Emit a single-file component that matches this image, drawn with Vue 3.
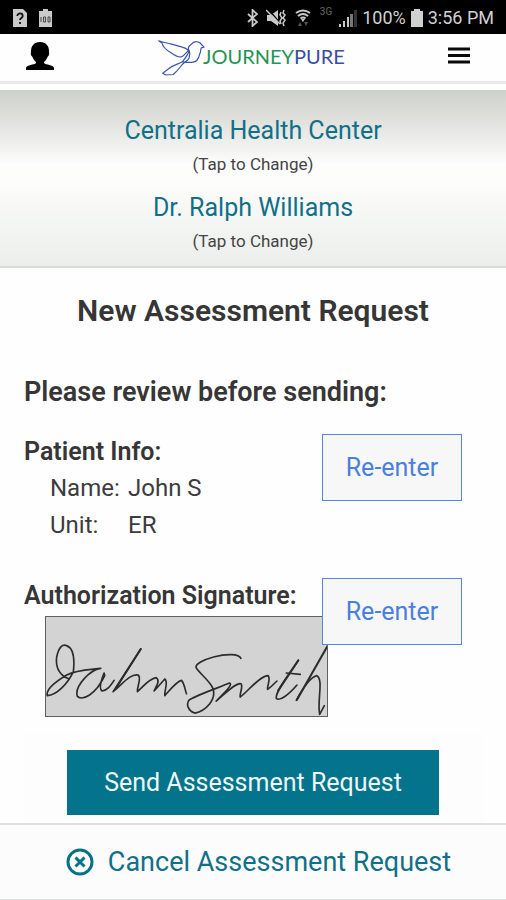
<script setup>
import { ref } from 'vue'

const choices = ref([
  { id: 'facility', name: 'Centralia Health Center' },
  { id: 'doctor', name: 'Dr. Ralph Williams' },
])

const patient = ref([
  { label: 'Name:', value: 'John S' },
  { label: 'Unit:', value: 'ER' },
])
</script>

<template>
  <div class="screen">
    <div class="status">
      <svg class="s-note" viewBox="0 0 14 18" width="14" height="18" aria-hidden="true">
        <path d="M0 0h10l4 4v14H0z" fill="#c9c9c9" />
        <path d="M4.300 7c0-3.400 5.400-3.400 5.400 0 0 2-2.700 2-2.700 4M7 13v2" fill="none" stroke="#111" stroke-width="1.800" />
      </svg>
      <svg class="s-full" viewBox="0 0 13 18" width="13" height="18" aria-hidden="true">
        <path d="M4 0h5v2h4v16H0V2h4z" fill="#c9c9c9" />
        <path d="M2 8v5M4.500 8h2v5h-2zM9 8h2v5H9z" fill="none" stroke="#444" stroke-width="1" />
      </svg>
      <span class="grow"></span>
      <svg viewBox="0 0 12 18" width="12" height="18" aria-hidden="true">
        <path d="M1 5l9 8-4.500 4V1L10 5l-9 8" fill="none" stroke="#c9c9c9" stroke-width="1.800" />
      </svg>
      <svg class="s-mute" viewBox="0 0 20 18" width="20" height="18" aria-hidden="true">
        <path d="M1 6h4l7-5v16l-7-5H1z" fill="#c9c9c9" />
        <path d="M2 0l13 15" stroke="#000" stroke-width="1.500" />
        <path d="M0 1l14 14" stroke="#c9c9c9" stroke-width="1.500" />
        <path d="M15 3l-1 3 2 3-2 3 1 3M18 1l-1 3 2 2-2 3 2 2-2 3 1 3" fill="none" stroke="#c9c9c9" stroke-width="1.500" />
      </svg>
      <svg class="s-wifi" viewBox="0 0 16 18" width="16" height="18" aria-hidden="true">
        <path d="M1 4q7-5 14 0M3 7q5-4 10 0M5.500 9.500q2.500-2 5 0" fill="none" stroke="#c9c9c9" stroke-width="2" />
        <path d="M6 10h4l-2 3z" fill="#c9c9c9" />
        <path d="M5 13l2 4H3zM9 13h4l-2 4z" fill="#555" />
      </svg>
      <span class="net">3G</span>
      <svg class="s-signal" viewBox="0 0 18 18" width="18" height="18" aria-hidden="true">
        <path d="M0 15h2v3H0zM4 12h2v6H4zM8 8h2v10H8z" fill="#c9c9c9" />
        <path d="M11 5h3v13h-3z" fill="#777" />
        <path d="M15 1h3v17h-3z" fill="#333" />
      </svg>
      <span class="clock">100%</span>
      <svg class="s-batt" viewBox="0 0 12 18" width="12" height="18" aria-hidden="true">
        <path d="M3 0h6v2h3v16H0V2h3z" fill="#d0d0d0" />
      </svg>
      <span class="clock">3:56 PM</span>
    </div>

    <header class="bar">
      <button class="icon-btn" type="button" aria-label="Account">
        <svg viewBox="0 0 28 28" width="28" height="28" aria-hidden="true">
          <path d="M14 0c6 0 9 4 9 9 0 2 .5 2.500 0 4-.3 1-1 1-1.500 2-.8 2-2 4-3.500 5v1c2 2 9 1.500 10 5v2H0v-2c1-3.500 8-3 10-5v-1c-1.500-1-2.700-3-3.500-5C6 14 5.300 14 5 13c-.5-1.500 0-2 0-4 0-5 3-9 9-9z" />
        </svg>
      </button>
      <a class="logo" href="#" aria-label="JourneyPure home">
        <svg viewBox="0 0 49 40" width="49" height="40" aria-hidden="true">
          <path d="M1.700 4.800C5 6 10 7 13.700 7.800L25.300 11.200Q29 12 31.500 14.500M1.700 4.800L5 7C6 13 13 16 17 18.800Q22 22 25 20.500C28 19 29 16 31.700 14.500Q30.500 11 33.700 8.800C36 6 38 5 40.500 5.800Q43 6 44 8L47 11.200 44.300 11.800C43.500 13 44 15 43 17.200Q42 22 39.700 24.500C37 27 32 26.800 25.300 25.800C22 28 16 29 12 32.500L5.700 37.200 8.700 39 16.300 38.500C19 36 21 34 23.700 30.500C26 26.500 31 25 32 22.200Q33.500 18 32.300 14.500C31 19 28 22.500 25.300 25.800" fill="none" stroke="#3c56ab" stroke-width="1.200" stroke-linejoin="round" stroke-linecap="round" />
        </svg>
        <span class="word"><span class="green">JOURNEY</span><span class="blue">PURE</span></span>
      </a>
      <button class="icon-btn" type="button" aria-label="Menu">
        <svg viewBox="0 0 22 17" width="22" height="17" aria-hidden="true">
          <path d="M0 2h22M0 8.500h22M0 15h22" stroke="#0a0a0a" stroke-width="3" />
        </svg>
      </button>
    </header>

    <nav class="context">
      <button v-for="c in choices" :key="c.id" class="choice" type="button">
        <span class="choice-name">{{ c.name }}</span>
        <span class="choice-hint">(Tap to Change)</span>
      </button>
    </nav>

    <main class="content">
      <h1>New Assessment Request</h1>
      <h2>Please review before sending:</h2>

      <section class="block patient">
        <h3>Patient Info:</h3>
        <dl>
          <template v-for="row in patient" :key="row.label">
            <dt>{{ row.label }}</dt>
            <dd>{{ row.value }}</dd>
          </template>
        </dl>
        <button class="reenter" type="button">Re-enter</button>
      </section>

      <section class="block">
        <h3>Authorization Signature:</h3>
        <svg class="signature" viewBox="48 143 842 295" role="img" aria-label="Signature of John Smith">
          <g fill="none" stroke="#2c2c2c" stroke-width="5" stroke-linecap="round" stroke-linejoin="round">
            <path d="M118 328C92 318 76 296 80 262C86 232 98 222 110 228C130 236 134 270 130 306C112 344 80 376 52 378C46 358 80 334 110 316C140 300 180 300 212 296C180 300 132 350 142 380C158 394 196 376 224 318L222 310C212 335 206 358 216 364C232 362 240 350 252 332" />
            <path d="M332 238L249 366C280 340 300 312 324 316C336 326 320 350 322 366C340 350 356 328 378 324C392 334 376 352 372 364L404 328C416 338 402 360 404 378C420 360 440 334 454 332C464 344 464 360 469 372" />
            <path d="M632 266C626 252 590 252 550 262C520 270 494 284 498 294C504 308 540 334 548 356C560 390 526 424 494 430C474 424 466 402 478 390C506 374 570 352 598 340C608 344 590 362 558 394C590 368 616 338 632 342C640 350 628 368 630 382C650 368 688 318 714 318C722 330 710 348 712 359C720 354 730 344 740 334" />
            <path stroke-width="6" d="M332 238L260 352M804 272L744 362M891 230L800 390" />
            <path d="M804 272C780 310 734 366 738 386C748 396 776 374 800 346M768 310L810 314M798 392C812 366 838 322 860 318C880 330 860 394 868 434L882 408" />
          </g>
        </svg>
        <button class="reenter" type="button">Re-enter</button>
      </section>

      <div class="send-area">
        <button class="send" type="button">Send Assessment Request</button>
      </div>
    </main>

    <footer class="footer">
      <button class="cancel" type="button">
        <svg viewBox="0 0 28 28" width="28" height="28" aria-hidden="true">
          <circle cx="14" cy="14" r="12" fill="none" stroke="#077189" stroke-width="3" />
          <path d="M9.500 9.500l9 9M18.500 9.500l-9 9" stroke="#077189" stroke-width="3" />
        </svg>
        <span>Cancel Assessment Request</span>
      </button>
    </footer>
  </div>
</template>

<style>
body {
  margin: 0;
  background: #fefefe;
}
</style>

<style scoped>
.screen {
  min-height: 100vh;
  display: flex;
  flex-direction: column;
  font-family: Roboto, "Liberation Sans", sans-serif;
  color: #3c3c3c;
  background: #fefefe;
}
button {
  font: inherit;
  border: 0;
  background: none;
  padding: 0;
  cursor: pointer;
}
h1, h2, h3, dl, dd {
  margin: 0;
}
.status {
  height: 34px;
  box-sizing: border-box;
  padding: 2px 12px 0 13px;
  display: flex;
  align-items: center;
  background: #000;
  color: #d0d0d0;
}
.s-full { margin-left: 12px; }
.grow { flex: 1; }
.s-mute { margin-left: 7px; }
.s-wifi { margin-left: 9px; }
.net {
  margin: 0 7px 0 9px;
  font-size: 10px;
  line-height: 12px;
  align-self: flex-start;
  padding-top: 4px;
  color: #666;
}
.s-signal { margin-right: 5px; }
.s-batt { margin: 0 5px; }
.clock {
  font-size: 18px;
  line-height: 24px;
}
.bar {
  height: 50px;
  box-sizing: border-box;
  padding: 0 36px 4px 26px;
  border-bottom: 3px solid #e8e9e8;
  display: flex;
  align-items: center;
  justify-content: space-between;
}
.icon-btn {
  display: flex;
}
.logo {
  display: flex;
  align-items: center;
  text-decoration: none;
}
.word {
  font-family: Lato, sans-serif;
  font-size: 20px;
  line-height: 24px;
  margin-left: -3px;
}
.green { color: #259453; }
.blue { color: #3a4da0; }
.context {
  margin-top: 6px;
  height: 178px;
  box-sizing: border-box;
  padding-top: 25px;
  border-bottom: 2px solid #d9dcd8;
  background: linear-gradient(#ced1cb 0%, #dfe0dc 16%, #f1f1ef 32%, #fdfdfd 42%, #fcfcfb 54%, #f3f5f2 78%, #ebeeea 100%);
  display: flex;
  flex-direction: column;
  align-items: center;
  gap: 16px;
}
.choice {
  display: flex;
  flex-direction: column;
  align-items: center;
  gap: 5px;
}
.choice-name {
  font-size: 25px;
  line-height: 32px;
  color: #107088;
}
.choice-hint {
  font-size: 17px;
  line-height: 24px;
  color: #444;
}
.content {
  padding: 25px 24px 0;
}
h1, h2, h3 {
  font-weight: 600;
  color: #363636;
}
h1 {
  font-size: 30px;
  line-height: 36px;
  text-align: center;
}
h2 {
  margin-top: 45px;
  font-size: 27px;
  line-height: 36px;
}
h3 {
  font-size: 25px;
  line-height: 36px;
  grid-area: 1 / 1;
}
.block {
  margin-top: 24px;
  padding-right: 20px;
  display: grid;
  grid-template-columns: 1fr 140px;
  align-items: start;
  align-content: start;
}
.patient {
  min-height: 120px;
}
dl {
  grid-area: 2 / 1;
  padding-left: 26px;
  display: grid;
  grid-template-columns: 78px 1fr;
  font-size: 24px;
  line-height: 37px;
}
.reenter {
  grid-area: 1 / 2 / span 2;
  z-index: 1;
  height: 67px;
  border: 1px solid #5187dd;
  background: #f7f7f7;
  color: #4a80dd;
  font-size: 25px;
  line-height: 32px;
}
.signature {
  grid-area: 2 / 1 / auto / -1;
  box-sizing: border-box;
  width: 283px;
  height: 101px;
  margin: 2px 0 0 21px;
  border: 1px solid #606060;
  background: #d3d3d3;
}
.send-area {
  margin-top: 16px;
  padding: 17px 43px 8px;
  background: #fcfdfc;
}
.send {
  display: block;
  width: 100%;
  height: 65px;
  background: #04738c;
  color: #eef8fa;
  font-size: 25px;
  line-height: 32px;
}
.footer {
  border-top: 2px solid #dfe1e1;
  border-bottom: 2px solid #dfe1e1;
  background: #fcfcfc;
  display: flex;
  justify-content: center;
  padding: 19px 0 19px 11px;
}
.cancel {
  display: flex;
  align-items: center;
  gap: 14px;
  font-size: 27px;
  line-height: 36px;
  color: #107088;
}
</style>
